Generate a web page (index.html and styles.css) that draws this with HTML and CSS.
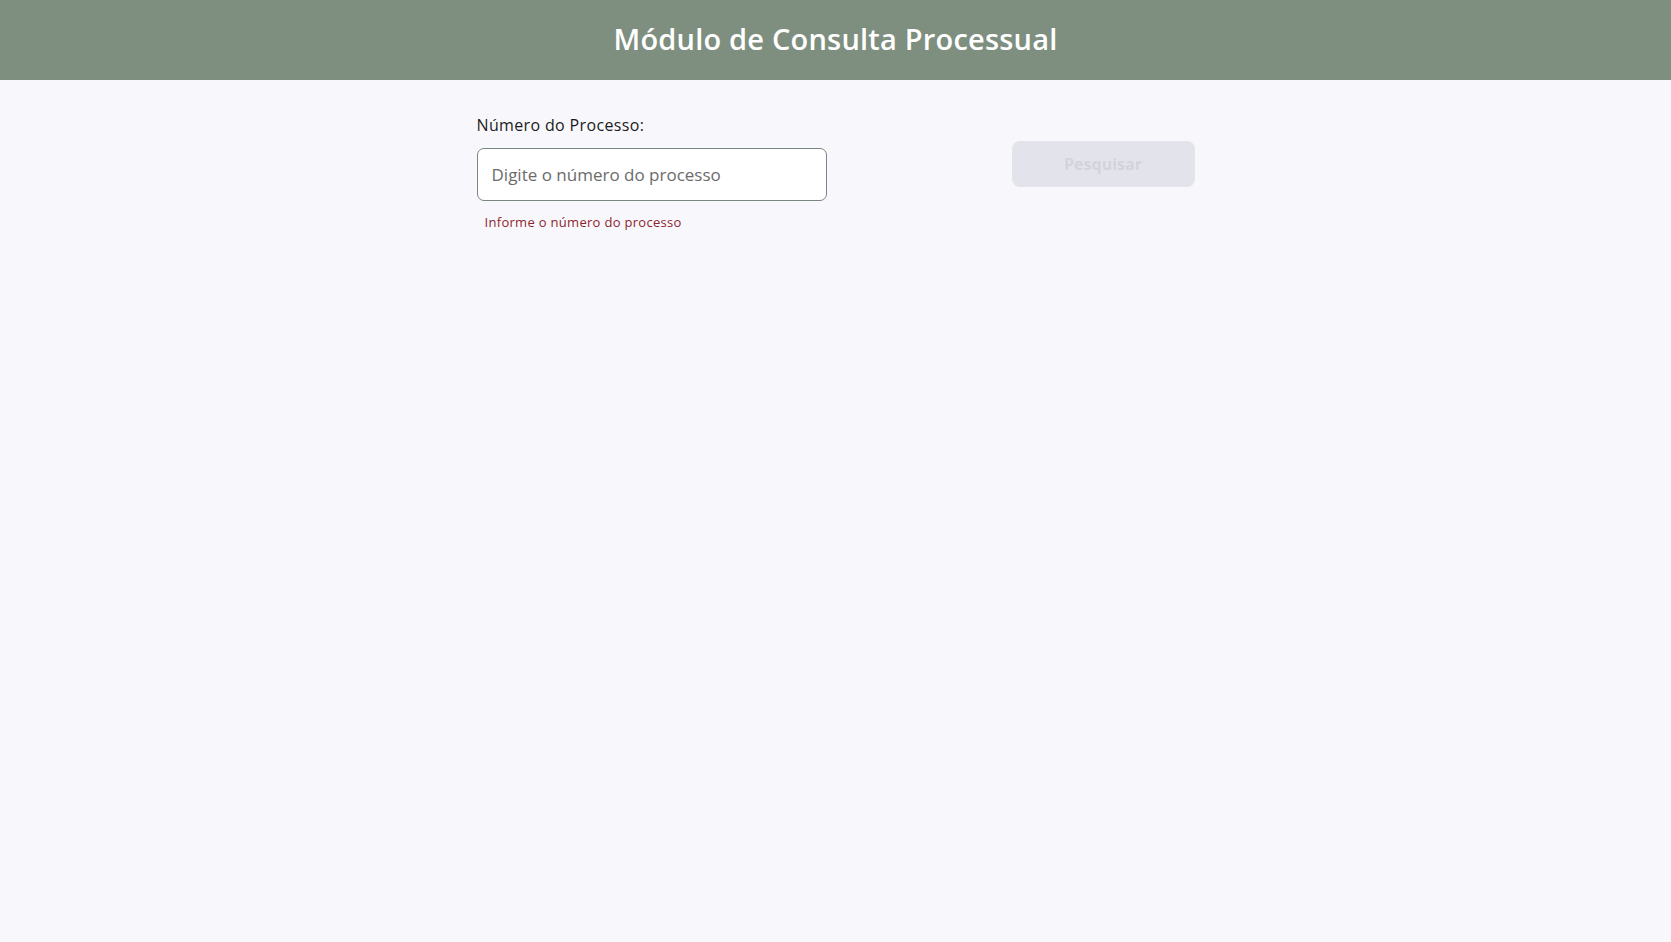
FILE: index.html
```html
<!DOCTYPE html>
<html lang="pt-BR">
<head>
<meta charset="utf-8">
<title>Módulo de Consulta Processual</title>
<link rel="stylesheet" href="styles.css">
</head>
<body>
<header class="topbar">
  <h1 class="title">Módulo de Consulta Processual</h1>
</header>
<main class="search">
  <div class="field">
    <label class="field-label" for="proc">Número do Processo:</label>
    <input class="field-input" id="proc" type="text" placeholder="Digite o número do processo">
    <p class="field-error">Informe o número do processo</p>
  </div>
  <button class="search-btn" type="button" disabled>Pesquisar</button>
</main>
</body>
</html>
```
FILE: styles.css
```css
html, body {
  margin: 0;
  padding: 0;
}
body {
  background: #f8f8fc;
  font-family: "Open Sans", "Liberation Sans", sans-serif;
  color: #1b1b1b;
  min-height: 942px;
}
.topbar {
  box-sizing: border-box;
  height: 80px;
  padding-bottom: 4px;
  background: #7e8f80;
  display: flex;
  align-items: center;
  justify-content: center;
}
.title {
  margin: 0;
  color: #ffffff;
  font-size: 29px;
  font-weight: 600;
  letter-spacing: 0.2px;
}
.search {
  width: 718px;
  margin: 0 auto;
  padding-top: 35px;
  display: flex;
  justify-content: space-between;
  align-items: flex-start;
}
.field {
  width: 350px;
  display: flex;
  flex-direction: column;
}
.field-label {
  font-size: 16px;
  line-height: 20px;
  letter-spacing: 0.35px;
  color: #1b1b1b;
  margin-bottom: 13px;
}
.field-input {
  box-sizing: border-box;
  width: 350px;
  height: 53px;
  border: 1px solid #7b877e;
  border-radius: 7px;
  background: #ffffff;
  padding: 0 14px;
  font-family: inherit;
  font-size: 17px;
  color: #333;
  outline: none;
}
.field-input::placeholder {
  color: #6b6b6b;
}
.field-error {
  margin: 12px 0 0 8px;
  font-size: 13px;
  line-height: 18px;
  letter-spacing: 0.3px;
  color: #8e1f2e;
}
.search-btn {
  margin-top: 26px;
  width: 183px;
  height: 46px;
  border: none;
  border-radius: 8px;
  background: #e3e4eb;
  color: #d3d4db;
  font-family: inherit;
  font-size: 16px;
  font-weight: 700;
}
```
